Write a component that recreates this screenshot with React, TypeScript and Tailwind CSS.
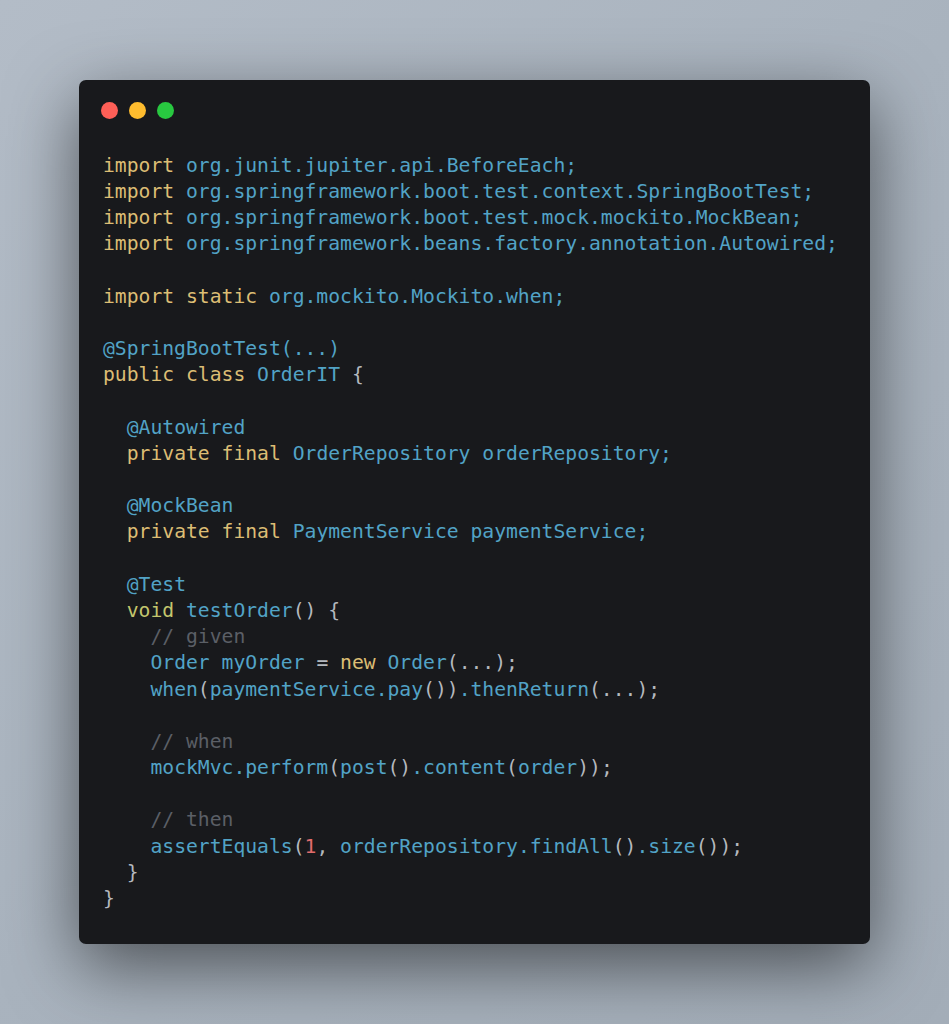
import React from "react";

const K = "text-[#dcbd74]";
const V = "text-[#c3c66d]";
const B = "text-[#52a3c6]";
const P = "text-[#b4b8be]";
const C = "text-[#5b5f66]";
const R = "text-[#e06c6c]";

type Tok = [string, string];

const lines: Tok[][] = [
  [[K, "import "], [B, "org.junit.jupiter.api.BeforeEach;"]],
  [[K, "import "], [B, "org.springframework.boot.test.context.SpringBootTest;"]],
  [[K, "import "], [B, "org.springframework.boot.test.mock.mockito.MockBean;"]],
  [[K, "import "], [B, "org.springframework.beans.factory.annotation.Autowired;"]],
  [],
  [[K, "import static "], [B, "org.mockito.Mockito.when;"]],
  [],
  [[B, "@SpringBootTest(...)"]],
  [[K, "public class "], [B, "OrderIT "], [P, "{"]],
  [],
  [[P, "  "], [B, "@Autowired"]],
  [[P, "  "], [K, "private final "], [B, "OrderRepository orderRepository;"]],
  [],
  [[P, "  "], [B, "@MockBean"]],
  [[P, "  "], [K, "private final "], [B, "PaymentService paymentService;"]],
  [],
  [[P, "  "], [B, "@Test"]],
  [[P, "  "], [V, "void "], [B, "testOrder"], [P, "() {"]],
  [[P, "    "], [C, "// given"]],
  [[P, "    "], [B, "Order myOrder "], [P, "= "], [K, "new "], [B, "Order"], [P, "(...);"]],
  [[P, "    "], [B, "when"], [P, "("], [B, "paymentService.pay"], [P, "())"], [B, ".thenReturn"], [P, "(...);"]],
  [],
  [[P, "    "], [C, "// when"]],
  [[P, "    "], [B, "mockMvc.perform"], [P, "("], [B, "post"], [P, "()"], [B, ".content"], [P, "("], [B, "order"], [P, "));"]],
  [],
  [[P, "    "], [C, "// then"]],
  [[P, "    "], [B, "assertEquals"], [P, "("], [R, "1"], [P, ", "], [B, "orderRepository.findAll"], [P, "()"], [B, ".size"], [P, "());"]],
  [[P, "  "], [P, "}"]],
  [[P, "}"]],
];

export default function App() {
  return (
    <div className="h-screen w-full flex items-center justify-center bg-[linear-gradient(135deg,#b3bcc7_0%,#a9b3be_50%,#a3adb8_100%)]">
      <div className="w-[791px] rounded-[7px] bg-[#18191c] pt-[22px] pb-[32px] pl-[22px] pr-6 shadow-[0_22px_70px_rgba(0,0,0,0.55)]">
        <div className="flex gap-[11px] h-[17px] items-center">
          <span className="w-[17px] h-[17px] rounded-full bg-[#fe5f57]" />
          <span className="w-[17px] h-[17px] rounded-full bg-[#febc2e]" />
          <span className="w-[17px] h-[17px] rounded-full bg-[#28c840]" />
        </div>
        <pre className="mt-[34px] pl-[2px] text-[19.7px] leading-[26.2px] font-['DejaVu_Sans_Mono',monospace] whitespace-pre">
          {lines.map((ln, i) => (
            <div key={i} className="h-[26.2px]">
              {ln.map(([c, t], j) => (
                <span key={j} className={c}>
                  {t}
                </span>
              ))}
            </div>
          ))}
        </pre>
      </div>
    </div>
  );
}
